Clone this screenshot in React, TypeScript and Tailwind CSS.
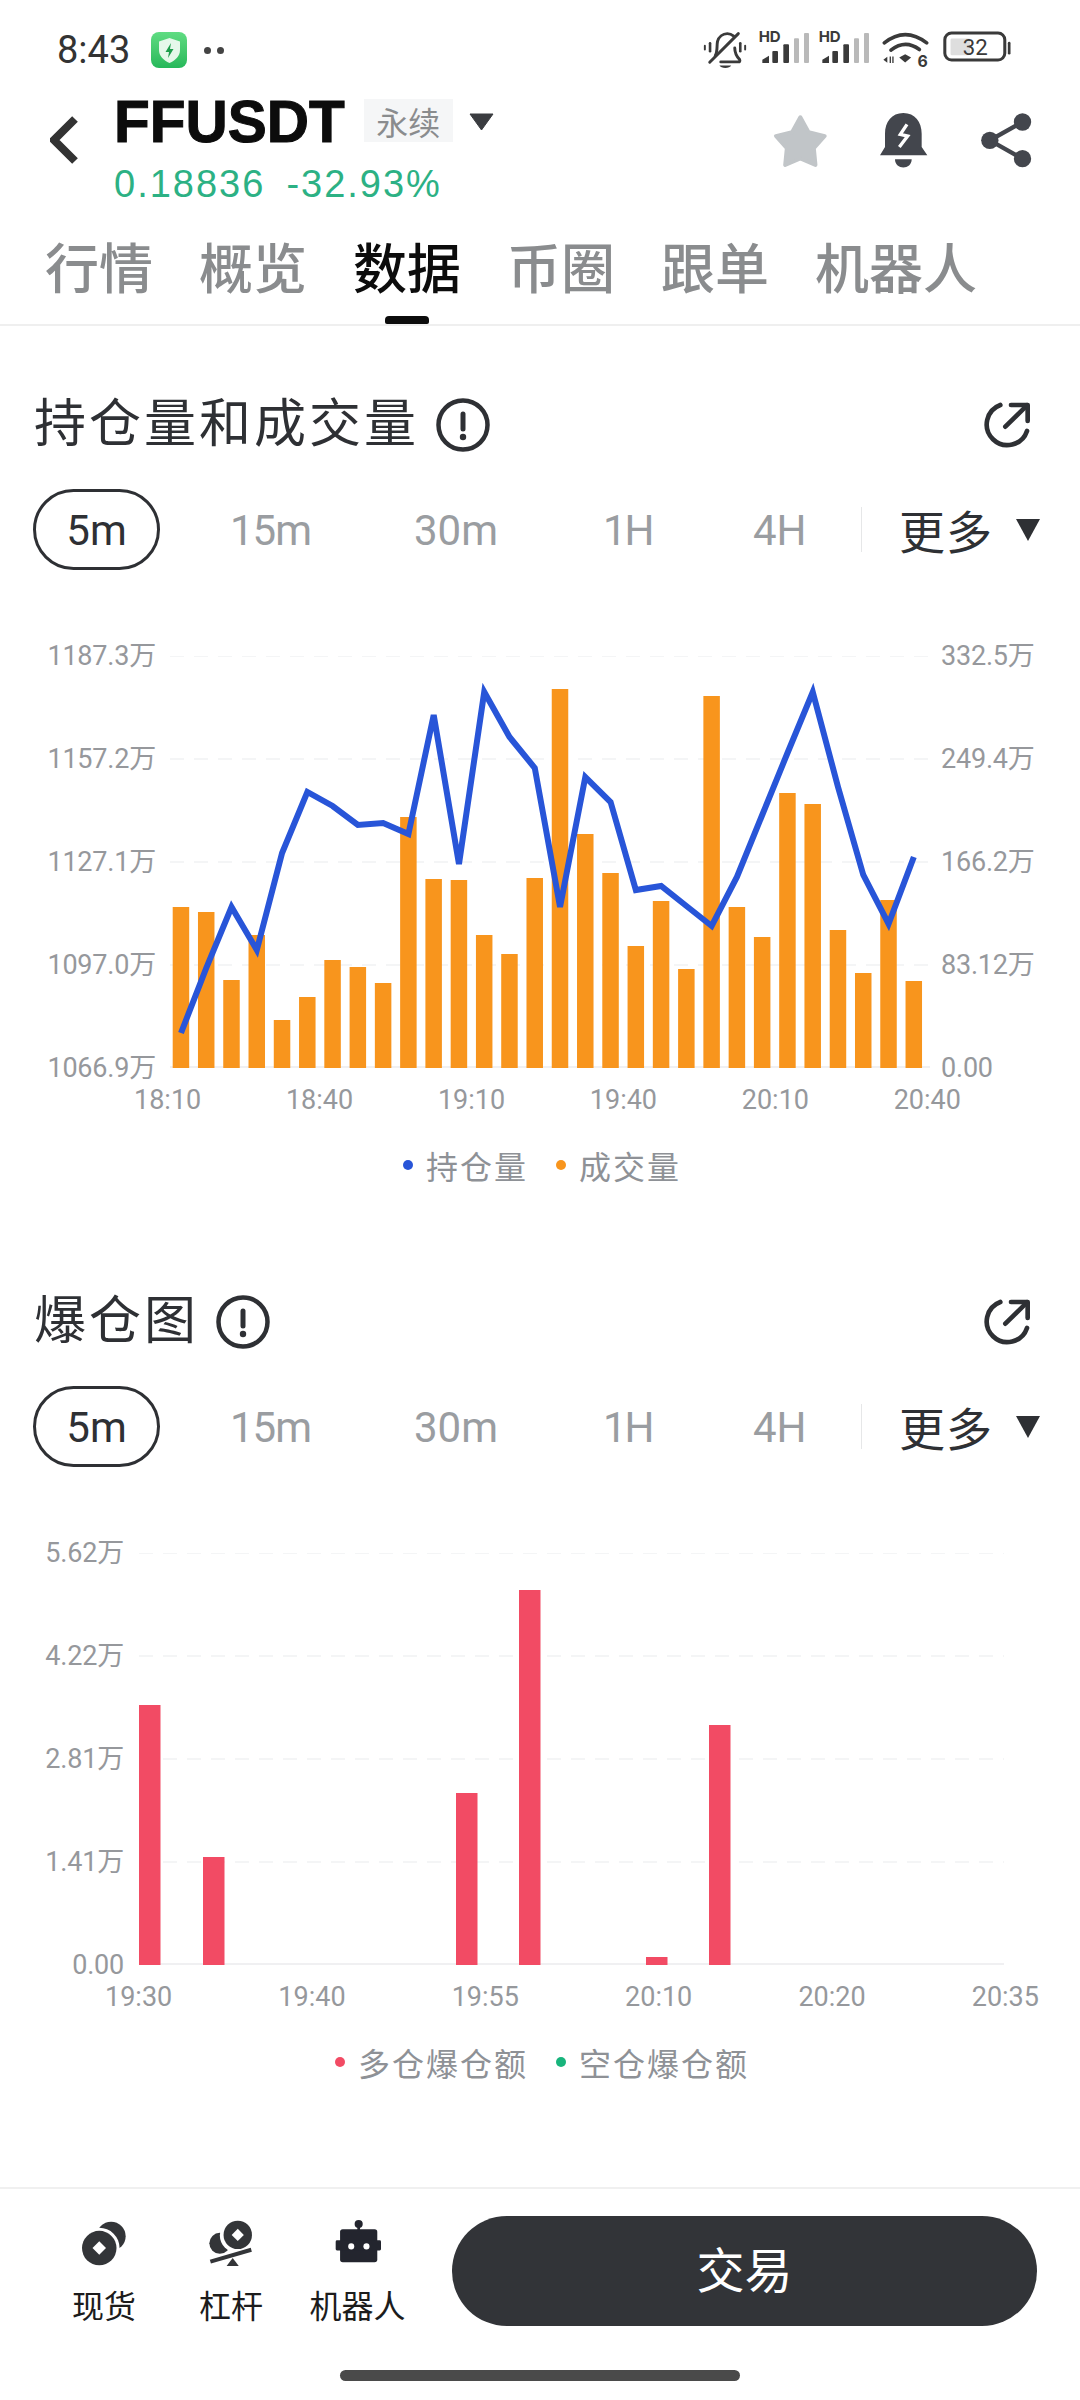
import React from "react";

const CJK = "[font-family:'Noto_Sans_CJK_SC',sans-serif]";

// bar tops and line points were read off the screenshot, in page pixels
const volumeTops = [
  907, 912, 980, 935, 1020, 997, 960, 967, 983, 817, 879, 880, 935, 954, 878, 689, 834, 873, 946, 901, 969, 696, 907,
  937, 793, 804, 930, 973, 900, 981,
];
const openInterest = [
  1033, 968, 907, 950, 853, 792, 806, 825, 823, 834, 715, 864, 692, 737, 768, 907, 777, 802, 890, 886, 906, 926, 877,
  815, 753, 692, 787, 875, 924, 857,
];
const linePoints = openInterest.map((y, i) => `${181 + i * 25.27},${y}`).join(" ");

const liquidations = [
  { x: 139, top: 1706 },
  { x: 203, top: 1858 },
  { x: 456, top: 1794 },
  { x: 519, top: 1591 },
  { x: 646, top: 1958 },
  { x: 709, top: 1726 },
];

const tabs = ["行情", "概览", "数据", "币圈", "跟单", "机器人"];

const Signal = () => (
  <svg width="50" height="40" viewBox="205 20 150 120" className="-mt-[6px]">
    <text x="204" y="72" fontSize="45" fontWeight="700" fill="#3a3a3a" fontFamily="Inter">
      HD
    </text>
    <path d="M215 134v-10l20-12v22z" fill="#3a3a3a" />
    <rect x="245" y="98" width="17" height="36" rx="3" fill="#3a3a3a" />
    <rect x="278" y="78" width="17" height="56" rx="3" fill="#3a3a3a" />
    <rect x="310" y="60" width="15" height="74" rx="3" fill="#b9b9b9" />
    <rect x="340" y="44" width="15" height="90" rx="3" fill="#b9b9b9" />
  </svg>
);

const StatusBar = () => (
  <div className="flex h-[90px] items-start justify-between pl-[57px] pr-[68px] pt-[30px]">
    <div className="flex items-center">
      <span className="text-[38px] leading-[40px] text-[#333]">8:43</span>
      <div className="ml-[21px] flex h-[36px] w-[36px] items-center justify-center rounded-[8px] bg-gradient-to-b from-[#5fdc82] to-[#25b85a]">
        <svg width="25" height="27" viewBox="0 0 25 27">
          <path d="M12.5 1 23 4.500V13c0 6-4.500 10.500-10.500 13C6.500 23.500 2 19 2 13V4.500z" fill="#e6f8ea" />
          <path d="M14 6 8.500 15H12l-1 6 5.500-9H13z" fill="#1f9e4c" />
        </svg>
      </div>
      <div className="ml-[17px] flex gap-[6px]">
        <span className="h-[7px] w-[7px] rounded-full bg-[#444]" />
        <span className="h-[7px] w-[7px] rounded-full bg-[#444]" />
      </div>
    </div>
    <div className="flex items-start pt-[1px]">
      <svg width="44" height="39" viewBox="38 30 134 120" className="mr-[12px]">
        <g fill="#3a3a3a">
          <rect x="40" y="72" width="6" height="18" rx="3" />
          <rect x="55" y="64" width="8" height="32" rx="4" />
          <rect x="148" y="64" width="8" height="32" rx="4" />
          <rect x="164" y="72" width="6" height="18" rx="3" />
          <path d="M88 136h36c-4 10-32 10-36 0z" />
        </g>
        <g fill="none" stroke="#3a3a3a" strokeWidth="9" strokeLinecap="round">
          <path d="M75 106c8-14 4-30 7-44 4-14 16-24 30-24 8 0 14 3 20 8" />
          <path d="M135 82c0 14 6 26 15 36 2 5 0 7-4 7H92" />
          <path d="M146 38 58 126" />
        </g>
      </svg>
      <div className="flex gap-[10px]">
        <Signal />
        <Signal />
      </div>
      <svg width="48" height="41" viewBox="575 38 145 124" className="ml-[13px]">
        <g fill="none" stroke="#3a3a3a" strokeWidth="11" strokeLinecap="round">
          <path d="M582 74q63-50 128 0" />
          <path d="M602 96q43-34 86-2" />
        </g>
        <path d="m627 118 18-10 18 10-18 15z" fill="#3a3a3a" />
        <path d="M579 125l12-9v18zM598 115h4v20h-4zM606 115h4v20h-4z" fill="#3a3a3a" />
        <text x="682" y="148" fontSize="48" fontWeight="700" fill="#3a3a3a" fontFamily="Inter">
          6
        </text>
      </svg>
      <svg width="69" height="31" viewBox="758 40 204 92" className="ml-[13px]">
        <rect x="763" y="46" width="178" height="80" rx="20" fill="none" stroke="#3a3a3a" strokeWidth="9" />
        <rect x="780" y="62" width="58" height="50" rx="4" fill="#dedede" />
        <text x="853" y="112" fontSize="66" textAnchor="middle" fill="#3a3a3a" fontFamily="Roboto">
          32
        </text>
        <rect x="950" y="72" width="8" height="38" rx="4" fill="#3a3a3a" />
      </svg>
    </div>
  </div>
);

const Header = () => (
  <div className="flex h-[125px] items-start">
    <svg width="28" height="48" viewBox="0 0 28 48" className="ml-[50px] mt-[26px]">
      <path d="M25 3 4 24l21 21" fill="none" stroke="#333" strokeWidth="8" />
    </svg>
    <div className="ml-[36px] flex flex-col">
      <div className="flex h-[64px] items-center">
        <span className="text-[58.500px] font-bold leading-[64px] text-[#0c0c0c] [-webkit-text-stroke:1px_#0c0c0c] [font-family:'Liberation_Sans',sans-serif]">
          FFUSDT
        </span>
        <span className={`ml-[19px] -mt-[3px] flex h-[43px] w-[89px] items-center justify-center bg-[#f5f6f7] text-[32px] text-[#8a8c8e] ${CJK}`}>
          永续
        </span>
        <svg width="25" height="18" viewBox="0 0 25 18" className="ml-[16px]">
          <path d="M1 1h23L12.500 17z" fill="#3a3c40" stroke="#3a3c40" strokeLinejoin="round" />
        </svg>
      </div>
      <div className="mt-[10px] flex gap-[21px] text-[38px] leading-[40px] tracking-[2px] text-[#2cb184] [font-family:'Liberation_Sans',sans-serif]">
        <span>0.18836</span>
        <span>-32.93%</span>
      </div>
    </div>
    <div className="ml-auto flex items-start gap-[50px] pr-[48px] pt-[23px]">
      <svg width="58" height="56" viewBox="670 335 170 170">
        <path
          d="M756 348 781 393 830 405 797 442 802 493 756 473 710 493 715 442 682 405 731 393z"
          fill="#c1c5c8"
          stroke="#c1c5c8"
          strokeWidth="12"
          strokeLinejoin="round"
        />
      </svg>
      <div className="flex items-start gap-[53px]">
        <svg width="49" height="55" viewBox="984 338 143 165">
          <path
            d="M1055 338c-35 0-55 27-55 62v40l-15 25h142l-17-25v-40c0-35-20-62-55-62z"
            fill="#43464d"
          />
          <path d="M1030 477h50c0 33-50 33-50 0z" fill="#43464d" />
          <path d="m1066 372-20 30 22 5-25 33" fill="none" stroke="#fff" strokeWidth="10" />
        </svg>
        <svg width="51" height="55" viewBox="1279 338 152 165">
          <path d="M1403 365 1305 420 1403 475" fill="none" stroke="#43464d" strokeWidth="13" />
          <circle cx="1403" cy="365" r="26" fill="#43464d" />
          <circle cx="1305" cy="420" r="26" fill="#43464d" />
          <circle cx="1403" cy="475" r="26" fill="#43464d" />
        </svg>
      </div>
    </div>
  </div>
);

const Tabs = () => (
  <div className={`flex h-[111px] items-start gap-[46px] border-b-2 border-[#efefef] pl-[45px] pt-[15px] ${CJK}`}>
    {tabs.map((t) => (
      <div key={t} className="relative h-full">
        <span className={`block text-[54px] font-medium leading-[72px] ${t === "数据" ? "text-[#0c0c0c]" : "text-[#8a8c8e]"}`}>
          {t}
        </span>
        {t === "数据" && (
          <span className="absolute bottom-0 left-1/2 h-[8px] w-[44px] -translate-x-1/2 rounded-t-[4px] rounded-b-[2px] bg-[#0c0c0c]" />
        )}
      </div>
    ))}
  </div>
);

const SectionHead = ({ title }: { title: string }) => (
  <div className="flex h-[60px] items-center pl-[34px] pr-[47px]">
    <span className={`-mt-[10px] text-[52px] leading-[60px] tracking-[3px] text-[#2e3034] ${CJK}`}>{title}</span>
    <svg width="56" height="56" viewBox="0 0 56 56" className="ml-[16px]">
      <circle cx="28" cy="28" r="24.500" fill="none" stroke="#2e3034" strokeWidth="4.500" />
      <path d="M28 17v15" stroke="#2e3034" strokeWidth="5" strokeLinecap="round" />
      <circle cx="28" cy="40" r="3.200" fill="#2e3034" />
    </svg>
    <svg width="52" height="50" viewBox="32 32 156 150" className="ml-auto">
      <g fill="none" stroke="#2e3034" strokeWidth="14" strokeLinecap="round" strokeLinejoin="round">
        <path d="M90 47A62 62 0 1 0 170 125" />
        <path d="M105 112 170 48" />
        <path d="M122 47h50v48" />
      </g>
    </svg>
  </div>
);

const Filters = () => (
  <div className="mt-[34px] flex h-[81px] items-center pl-[33px] text-[42px] leading-[48px] text-[#9a9da1]">
    <span className="flex h-[81px] w-[127px] items-center justify-center rounded-[41px] border-[3px] border-[#2e3034] pt-[3px] text-[#2e3034]">
      5m
    </span>
    <span className="ml-[70px] w-[78px] pt-[3px] tracking-[-1px]">15m</span>
    <span className="ml-[106px] w-[84px] pt-[3px]">30m</span>
    <span className="ml-[105px] w-[44px] pt-[3px] tracking-[-2px]">1H</span>
    <span className="ml-[106px] w-[53px] pt-[3px] whitespace-nowrap">4H</span>
    <span className="ml-[55px] h-[45px] w-px bg-[#e6e7e8]" />
    <span className={`ml-[37px] -mt-[2px] text-[46px] tracking-[1px] text-[#2e3034] ${CJK}`}>更多</span>
    <svg width="24" height="22" viewBox="0 0 24 22" className="ml-[23px]">
      <path d="M0 0h24L12 22z" fill="#2e3034" />
    </svg>
  </div>
);

const AxisColumn = ({ labels, className }: { labels: string[]; className: string }) => (
  <div className={`flex h-[444px] shrink-0 flex-col justify-between text-[27px] leading-[32px] tracking-[-0.2px] text-[#96989c] ${className}`}>
    {labels.map((l) => (
      <span key={l} className="h-[32px] whitespace-nowrap">
        {l}
      </span>
    ))}
  </div>
);

const Legend = ({ items }: { items: { label: string; dot: string }[] }) => (
  <div className={`mt-[29px] flex h-[40px] items-center justify-center gap-[28px] pl-[4px] text-[32px] tracking-[2px] text-[#8e9196] ${CJK}`}>
    {items.map((it) => (
      <div key={it.label} className="flex items-center gap-[13px]">
        <span className={`h-[10px] w-[10px] rounded-full ${it.dot}`} />
        <span>{it.label}</span>
      </div>
    ))}
  </div>
);

const Grid = ({ x1, x2 }: { x1: number; x2: number }) => (
  <g stroke="#f4f5f6" strokeWidth="2">
    {[656, 759, 862, 965].map((y) => (
      <line key={y} x1={x1} x2={x2} y1={y} y2={y} strokeDasharray="14 10" />
    ))}
    <line x1={x1} x2={x2} y1={1067} y2={1067} stroke="#f0f0f2" />
  </g>
);

const VolumeChart = () => (
  <div className="flex pl-[49px]">
    <AxisColumn
      className="w-[107px] items-end"
      labels={["1187.3万", "1157.2万", "1127.1万", "1097.0万", "1066.9万"]}
    />
    <svg width="785" height="412" viewBox="156 656 785 412" className="mt-[16px] shrink-0">
      <Grid x1={170} x2={930} />
      {volumeTops.map((top, i) => (
        <rect key={i} x={172.700 + i * 25.27} y={top} width="16.500" height={1068 - top} fill="#f8951d" />
      ))}
      <polyline points={linePoints} fill="none" stroke="#2855d8" strokeWidth="6" strokeLinejoin="miter" />
    </svg>
    <AxisColumn className="w-[100px]" labels={["332.5万", "249.4万", "166.2万", "83.12万", "0.00"]} />
  </div>
);

const LiquidationChart = () => (
  <div className="flex pl-[47px]">
    <AxisColumn className="w-[77px] items-end" labels={["5.62万", "4.22万", "2.81万", "1.41万", "0.00"]} />
    <svg width="890" height="412" viewBox="124 656 890 412" className="mt-[16px] shrink-0">
      <Grid x1={139} x2={1004} />
      {liquidations.map((b) => (
        <rect key={b.x} x={b.x} y={b.top - 898} width="21.500" height={1966 - b.top} fill="#f24b64" />
      ))}
    </svg>
  </div>
);

const XAxis = ({ labels, className }: { labels: string[]; className: string }) => (
  <div className={`flex h-[32px] justify-between text-[27px] leading-[32px] text-[#96989c] ${className}`}>
    {labels.map((l) => (
      <span key={l}>{l}</span>
    ))}
  </div>
);

const BottomBar = () => (
  <div className="mt-auto flex flex-col">
    <div className="flex h-[183px] items-start border-t-2 border-[#f0f0f0]">
      <div className={`flex pl-[72px] pt-[31px] text-[32px] leading-[40px] text-[#1c1c1c] ${CJK}`}>
        <div className="flex w-[64px] flex-col items-center">
          <svg width="46" height="46" viewBox="36 32 136 136">
            <circle cx="125" cy="80" r="43" fill="#333538" />
            <circle cx="90" cy="115" r="60" fill="#fff" />
            <circle cx="90" cy="115" r="51" fill="#333538" />
            <path d="m90 95 20 20-20 20-20-20z" fill="#fff" />
          </svg>
          <span className="mt-[18px] whitespace-nowrap">现货</span>
        </div>
        <div className="ml-[63px] flex w-[64px] flex-col items-center">
          <svg width="46" height="46" viewBox="420 34 136 136">
            <circle cx="455" cy="103" r="31" fill="#333538" />
            <circle cx="505" cy="80" r="50" fill="#fff" />
            <circle cx="508" cy="78" r="42" fill="#333538" />
            <path d="m508 60 18 18-18 18-18-18z" fill="#fff" />
            <path d="M427 157 548 122" stroke="#333538" strokeWidth="12" />
            <path d="M475 170h36l-18-24z" fill="#333538" />
          </svg>
          <span className="mt-[18px] whitespace-nowrap">杠杆</span>
        </div>
        <div className="ml-[46px] flex w-[97px] flex-col items-center">
          <svg width="46" height="46" viewBox="795 30 136 136">
            <circle cx="865" cy="42" r="12" fill="#23252e" />
            <rect x="861" y="45" width="8" height="20" fill="#23252e" />
            <rect x="810" y="57" width="110" height="98" rx="8" fill="#23252e" />
            <rect x="797" y="90" width="134" height="30" rx="4" fill="#23252e" />
            <circle cx="843" cy="108" r="9" fill="#fff" />
            <circle cx="888" cy="108" r="9" fill="#fff" />
          </svg>
          <span className="mt-[18px] whitespace-nowrap">机器人</span>
        </div>
      </div>
      <div className={`ml-[46px] mt-[27px] flex h-[110px] w-[585px] items-center justify-center rounded-[55px] bg-[#323438] pb-[8px] text-[48px] text-white ${CJK}`}>
        交易
      </div>
    </div>
    <div className="flex h-[30px] items-start justify-center">
      <span className="h-[11px] w-[400px] rounded-full bg-[#4a4a4a]" />
    </div>
  </div>
);

export default function App() {
  return (
    <div className="flex h-[2400px] w-[1080px] flex-col overflow-hidden bg-white [font-family:Roboto,'Noto_Sans_CJK_SC',sans-serif]">
      <StatusBar />
      <Header />
      <Tabs />
      <section className="h-[897px] pt-[69px]">
        <SectionHead title="持仓量和成交量" />
        <Filters />
        <div className="mt-[70px]">
          <VolumeChart />
          <XAxis labels={["18:10", "18:40", "19:10", "19:40", "20:10", "20:40"]} className="ml-[134px] w-[827px]" />
          <Legend
            items={[
              { label: "持仓量", dot: "bg-[#2855d8]" },
              { label: "成交量", dot: "bg-[#f8951d]" },
            ]}
          />
        </div>
      </section>
      <section className="pt-[69px]">
        <SectionHead title="爆仓图" />
        <Filters />
        <div className="mt-[70px]">
          <LiquidationChart />
          <XAxis labels={["19:30", "19:40", "19:55", "20:10", "20:20", "20:35"]} className="ml-[105px] w-[934px]" />
          <Legend
            items={[
              { label: "多仓爆仓额", dot: "bg-[#f24b64]" },
              { label: "空仓爆仓额", dot: "bg-[#18b47c]" },
            ]}
          />
        </div>
      </section>
      <BottomBar />
    </div>
  );
}
